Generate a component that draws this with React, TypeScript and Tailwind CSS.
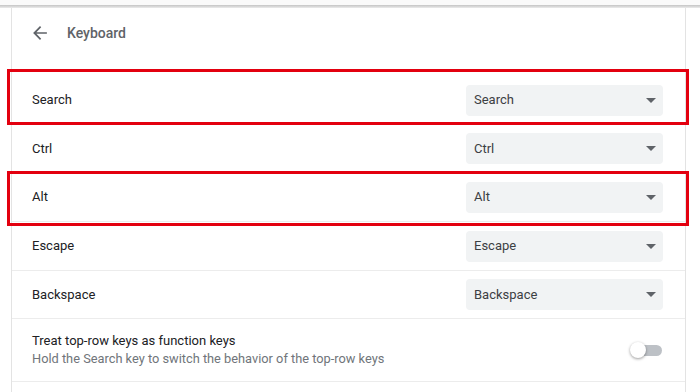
import React from "react";

function Select({ value }: { value: string }) {
  return (
    <div className="flex h-[31px] w-[197px] items-center justify-between rounded-[4px] bg-[#f1f3f4] pl-[8px] pr-[7px]">
      <span className="text-[13px] text-[#3c4043]">{value}</span>
      <svg width="10" height="5" viewBox="0 0 10 5">
        <path d="M0 0 L10 0 L5 5 Z" fill="#5f6368" />
      </svg>
    </div>
  );
}

function Row({
  label,
  value,
  h,
  border = true,
  highlight,
}: {
  label: string;
  value: string;
  h: string;
  border?: boolean;
  highlight?: string;
}) {
  return (
    <div
      className={`relative flex items-center justify-between pl-[20px] pr-[22px] ${h} ${
        border ? "border-t border-[#ececec]" : ""
      }`}
    >
      <span className="text-[13px] text-[#202124]">{label}</span>
      <Select value={value} />
      {highlight ? (
        <div
          className={`pointer-events-none absolute z-10 left-[-5px] right-[-4px] border-[3px] border-[#e3000f] ${highlight}`}
        />
      ) : null}
    </div>
  );
}

export default function App() {
  return (
    <div className="h-[392px] w-[700px] overflow-hidden bg-white font-['Roboto',sans-serif]">
      <div className="h-[5px] bg-[#fafafa]" />
      <div className="h-[3px] bg-gradient-to-b from-[#c4c4c4] to-[#ececec]" />
      <div className="flex">
        <div className="w-[11px] shrink-0" />
        <div className="h-[400px] w-[675px] shrink-0 border-x border-[#e3e3e3]">
          <div className="flex h-[50px] items-center pl-[16px]">
            <svg width="24" height="24" viewBox="0 0 24 24">
              <path
                d="M20 11H7.83l5.59-5.59L12 4l-8 8 8 8 1.41-1.41L7.83 13H20v-2z"
                fill="#5f6368"
                transform="translate(12 12) scale(0.86) translate(-12 -12)"
              />
            </svg>
            <span className="ml-[15px] text-[14px] font-medium text-[#5f6368]">Keyboard</span>
          </div>
          <div className="h-[18px]" />
          <Row label="Search" value="Search" h="h-[48px]" border={false} highlight="top-[-7px] bottom-[-1px]" />
          <Row label="Ctrl" value="Ctrl" h="h-[48px]" />
          <Row label="Alt" value="Alt" h="h-[49px]" highlight="top-[-2px] bottom-[-5px]" />
          <Row label="Escape" value="Escape" h="h-[49px]" />
          <Row label="Backspace" value="Backspace" h="h-[48px]" />
          <div className="flex h-[64px] items-center justify-between border-y border-[#ececec] pl-[20px] pr-[23px]">
            <div className="flex flex-col">
              <span className="text-[13px] leading-[18px] text-[#202124]">Treat top-row keys as function keys</span>
              <span className="text-[12.8px] leading-[18px] text-[#70757a]">
                Hold the Search key to switch the behavior of the top-row keys
              </span>
            </div>
            <div className="relative h-[16px] w-[32px]">
              <div className="absolute left-[3px] right-0 top-[3px] h-[11px] rounded-full bg-[#bdc1c6]" />
              <div className="absolute left-0 top-0 h-[16px] w-[16px] rounded-full bg-white shadow-[0_1px_3px_rgba(0,0,0,0.4)]" />
            </div>
          </div>
        </div>
      </div>
    </div>
  );
}
